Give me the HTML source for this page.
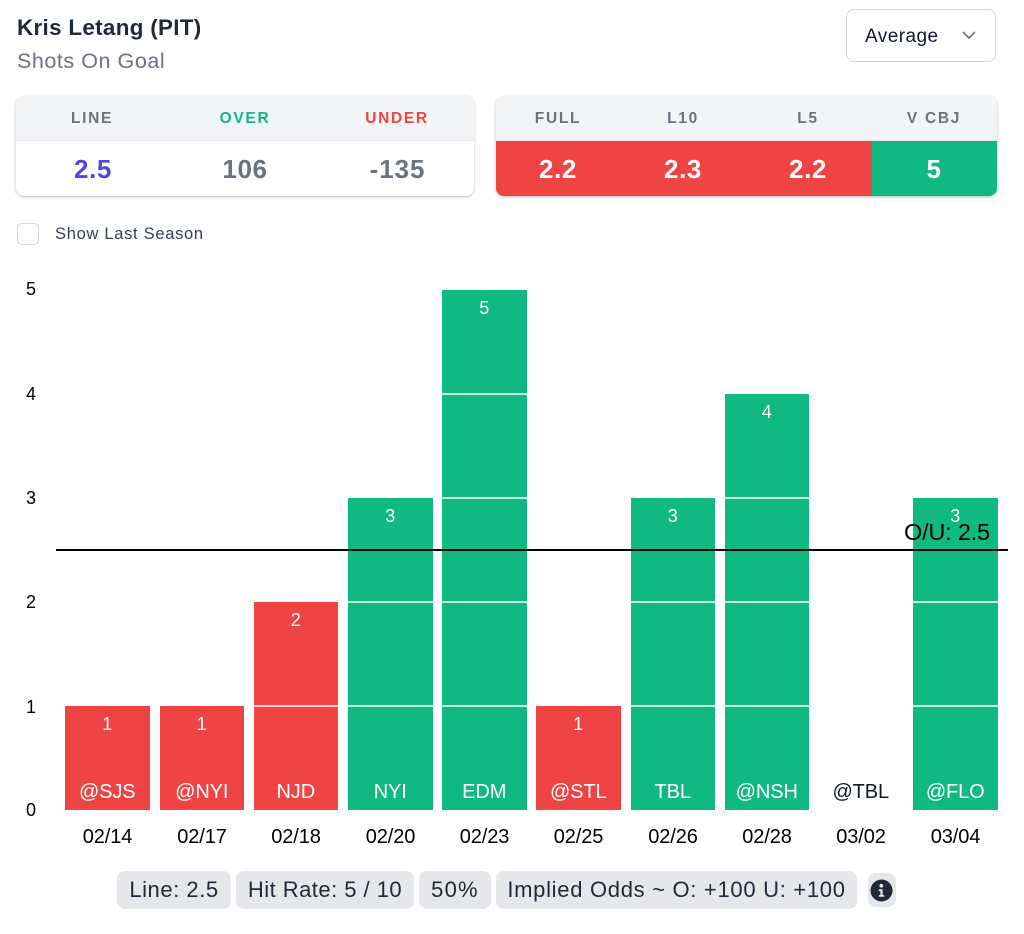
<!DOCTYPE html>
<html><head><meta charset="utf-8">
<style>
html,body{margin:0;padding:0;background:#fff;}
body{width:1024px;height:934px;position:relative;overflow:hidden;font-family:"Liberation Sans",sans-serif;}
.a{position:absolute;white-space:nowrap;}
.card{position:absolute;top:96px;height:100px;border-radius:8px;box-shadow:0 1px 3px rgba(0,0,0,.2),0 1px 2px rgba(0,0,0,.08);background:#fff;overflow:hidden;}
.head{position:absolute;left:0;right:0;top:0;height:44px;background:#f3f4f6;border-bottom:1px solid #e5e7eb;}
.h{position:absolute;top:14px;font-size:15.5px;line-height:18px;font-weight:700;letter-spacing:1.7px;color:#6b7280;transform:translateX(-50%);white-space:nowrap;}
.v{position:absolute;top:59px;font-size:26px;line-height:28px;font-weight:700;transform:translateX(-50%);white-space:nowrap;letter-spacing:.6px;}
.bar{position:absolute;width:84.5px;bottom:124px;color:#fff;text-align:center;}
.r{background:#ef4444;}.g{background:#10b981;}
.seg{position:absolute;left:0;right:0;height:2px;background:rgba(255,255,255,.75);}
.n{position:absolute;left:0;right:0;top:8px;font-size:18px;line-height:21px;}
.t{position:absolute;left:0;right:0;bottom:6px;font-size:20px;line-height:24px;letter-spacing:-.1px;}
.y{position:absolute;left:26px;font-size:18px;line-height:20px;color:#000;}
.d{position:absolute;top:827px;font-size:20px;line-height:21px;color:#000;transform:translateX(-50%);letter-spacing:-.1px;}
.p{position:absolute;top:871px;height:38px;line-height:38px;background:#e5e7eb;border-radius:8px;font-size:22px;color:#1f2937;text-align:center;white-space:nowrap;}
</style></head>
<body>
<div class="a" style="left:17px;top:15px;font-size:22.4px;line-height:25px;font-weight:700;color:#1f2937;letter-spacing:.32px;">Kris Letang (PIT)</div>
<div class="a" style="left:17px;top:48px;font-size:21.5px;line-height:26px;color:#6b7280;letter-spacing:.55px;">Shots On Goal</div>

<div class="a" style="left:846px;top:9px;width:150px;height:53px;box-sizing:border-box;border:1.5px solid #d1d5db;border-radius:8px;background:#fff;"></div>
<div class="a" style="left:865px;top:25px;font-size:19px;line-height:23px;color:#111827;letter-spacing:.45px;">Average</div>
<svg class="a" style="left:961px;top:30px;" width="16" height="12" viewBox="0 0 16 12"><path d="M2 2 L8 8 L14 2" fill="none" stroke="#6b7280" stroke-width="1.6"/></svg>

<div class="card" style="left:16px;width:458px;">
  <div class="head"></div>
  <div class="h" style="left:76px;">LINE</div>
  <div class="h" style="left:229px;color:#10b981;">OVER</div>
  <div class="h" style="left:381px;color:#ef4444;">UNDER</div>
  <div class="v" style="left:77px;color:#4f46e5;">2.5</div>
  <div class="v" style="left:229px;color:#6b7280;">106</div>
  <div class="v" style="left:381.5px;color:#6b7280;letter-spacing:.9px;">-135</div>
</div>

<div class="card" style="left:496px;width:501px;">
  <div class="head"></div>
  <div class="h" style="left:62px;">FULL</div>
  <div class="h" style="left:187px;">L10</div>
  <div class="h" style="left:312px;">L5</div>
  <div class="h" style="left:438px;">V CBJ</div>
  <div style="position:absolute;left:0;top:45px;width:376px;height:55px;background:#ef4444;"></div>
  <div style="position:absolute;left:376px;top:45px;width:125px;height:55px;background:#10b981;"></div>
  <div class="v" style="left:62px;color:#fff;">2.2</div>
  <div class="v" style="left:187px;color:#fff;">2.3</div>
  <div class="v" style="left:312px;color:#fff;">2.2</div>
  <div class="v" style="left:438px;color:#fff;">5</div>
</div>

<div class="a" style="left:17px;top:223px;width:22px;height:22px;box-sizing:border-box;border:1.5px solid #d1d5db;border-radius:5px;background:#fff;"></div>
<div class="a" style="left:55px;top:224px;font-size:16.5px;line-height:21px;color:#374151;letter-spacing:.7px;">Show Last Season</div>

<div class="y" style="top:279px;">5</div>
<div class="y" style="top:384px;">4</div>
<div class="y" style="top:488px;">3</div>
<div class="y" style="top:592px;">2</div>
<div class="y" style="top:697px;">1</div>
<div class="y" style="top:800px;">0</div>

<div class="bar r" style="left:65px;height:104px;"><div class="n">1</div><div class="t">@SJS</div></div>
<div class="bar r" style="left:159.5px;height:104px;"><div class="n">1</div><div class="t">@NYI</div></div>
<div class="bar r" style="left:253.5px;height:208px;"><div class="seg" style="top:103px;"></div><div class="n">2</div><div class="t">NJD</div></div>
<div class="bar g" style="left:348px;height:312px;"><div class="seg" style="top:103px;"></div><div class="seg" style="top:207px;"></div><div class="n">3</div><div class="t">NYI</div></div>
<div class="bar g" style="left:442px;height:520px;"><div class="seg" style="top:103px;"></div><div class="seg" style="top:207px;"></div><div class="seg" style="top:311px;"></div><div class="seg" style="top:415px;"></div><div class="n">5</div><div class="t">EDM</div></div>
<div class="bar r" style="left:536px;height:104px;"><div class="n">1</div><div class="t">@STL</div></div>
<div class="bar g" style="left:630.5px;height:312px;"><div class="seg" style="top:103px;"></div><div class="seg" style="top:207px;"></div><div class="n">3</div><div class="t">TBL</div></div>
<div class="bar g" style="left:724.5px;height:416px;"><div class="seg" style="top:103px;"></div><div class="seg" style="top:207px;"></div><div class="seg" style="top:311px;"></div><div class="n">4</div><div class="t">@NSH</div></div>
<div class="bar" style="left:818.5px;height:104px;color:#111827;"><div class="t">@TBL</div></div>
<div class="bar g" style="left:913px;height:312px;"><div class="seg" style="top:103px;"></div><div class="seg" style="top:207px;"></div><div class="n">3</div><div class="t">@FLO</div></div>

<div class="a" style="left:56px;top:549px;width:952px;height:2px;background:#000;"></div>
<div class="a" style="left:904px;top:518px;font-size:23.5px;line-height:28px;color:#000;letter-spacing:-.2px;">O/U: 2.5</div>

<div class="d" style="left:107.5px;">02/14</div>
<div class="d" style="left:202px;">02/17</div>
<div class="d" style="left:296px;">02/18</div>
<div class="d" style="left:390.5px;">02/20</div>
<div class="d" style="left:484.5px;">02/23</div>
<div class="d" style="left:578.5px;">02/25</div>
<div class="d" style="left:673px;">02/26</div>
<div class="d" style="left:767px;">02/28</div>
<div class="d" style="left:861px;">03/02</div>
<div class="d" style="left:955.5px;">03/04</div>

<div class="p" style="left:117px;width:114px;letter-spacing:.55px;">Line: 2.5</div>
<div class="p" style="left:236px;width:178px;letter-spacing:.47px;">Hit Rate: 5 / 10</div>
<div class="p" style="left:419px;width:72px;letter-spacing:1.2px;">50%</div>
<div class="p" style="left:496px;width:361px;letter-spacing:.7px;">Implied Odds ~ O: +100 U: +100</div>
<div class="a" style="left:868px;top:873px;width:28px;height:34px;background:#e5e7eb;border-radius:8px;"></div>
<svg class="a" style="left:870px;top:879px;" width="23" height="23" viewBox="0 0 23 23"><circle cx="11.5" cy="11.5" r="11" fill="#1f2937"/><circle cx="11.3" cy="6.8" r="1.9" fill="#e5e7eb"/><path d="M8.8 10.3 H12.6 V16 H14.2 V17.8 H9 V16 H10.4 V12 H8.8 Z" fill="#e5e7eb"/></svg>
</body></html>
